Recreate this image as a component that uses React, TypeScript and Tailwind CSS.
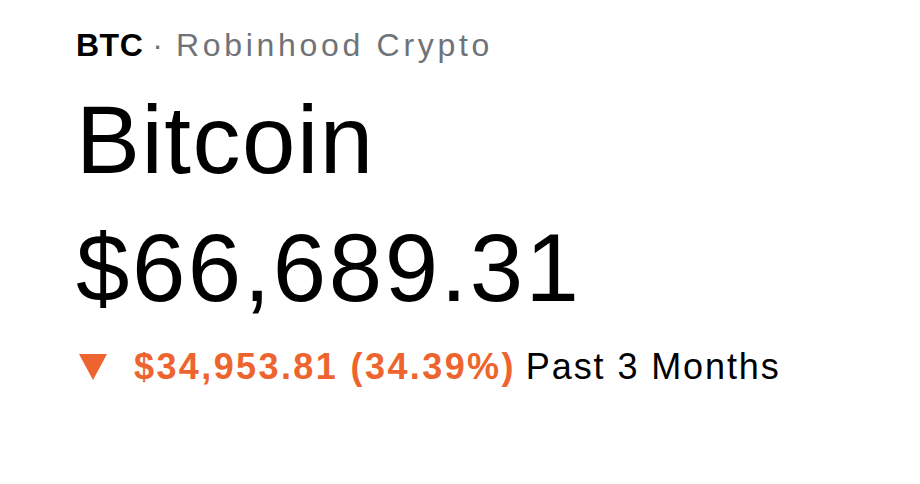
import React from "react";

export default function App() {
  return (
    <div
      className="w-[920px] h-[484px] bg-white overflow-hidden pl-[76px] pt-[26px] flex flex-col"
      style={{ fontFamily: '"Liberation Sans", Arial, sans-serif' }}
    >
      <div className="flex items-baseline text-[32px] leading-[38px] whitespace-nowrap">
        <span className="font-bold text-black tracking-[0.5px]">BTC</span>
        <span className="text-[#6f7378] ml-[9px]">·</span>
        <span className="text-[#6f7378] ml-[13px] tracking-[3.7px]">Robinhood Crypto</span>
      </div>
      <div className="mt-[26px] text-[96px] leading-[100px] text-black tracking-[1.5px] whitespace-nowrap">
        Bitcoin
      </div>
      <div className="mt-[28px] text-[96px] leading-[100px] text-black tracking-[2.5px] whitespace-nowrap">
        $66,689.31
      </div>
      <div className="mt-[29px] flex items-center text-[36px] leading-[40px] whitespace-nowrap">
        <svg width="28" height="26" viewBox="0 0 28 26" className="ml-[3px] shrink-0">
          <polygon points="0,0 28,0 14,26" fill="#EE642E" />
        </svg>
        <span className="ml-[27px] font-bold text-[#EE642E] tracking-[2.4px]">$34,953.81 (34.39%)</span>
        <span className="ml-[10px] text-black tracking-[1.9px]">Past 3 Months</span>
      </div>
    </div>
  );
}
